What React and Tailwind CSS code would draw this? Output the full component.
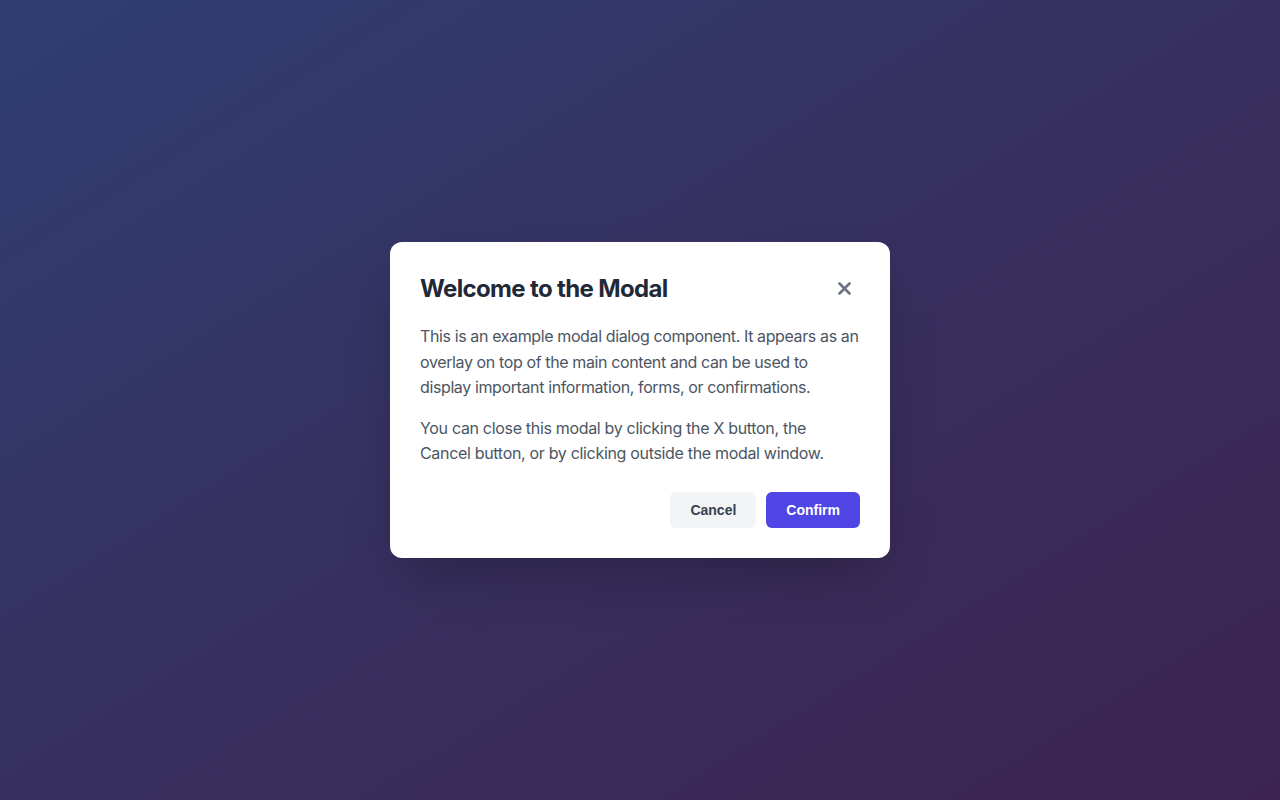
import { useState } from 'react';

export default function App() {
  const [open, setOpen] = useState(true);

  return (
    <div
      className="w-full h-[800px] flex items-center justify-center bg-gradient-to-br from-[#2e3e73] via-[#37305f] to-[#3d2450]"
      style={{ fontFamily: 'Inter, "Noto Sans", sans-serif' }}
      onClick={() => setOpen(false)}
    >
      {open && (
        <div
          className="w-[500px] bg-white rounded-xl p-[30px] shadow-2xl"
          onClick={e => e.stopPropagation()}
        >
          {/* Header */}
          <div className="flex items-center justify-between mb-[19px]">
            <h2 className="text-2xl leading-8 font-bold text-[#1f2937] mt-px tracking-[-0.027em]">
              Welcome to the Modal
            </h2>
            <button
              onClick={() => setOpen(false)}
              className="w-8 h-8 flex items-center justify-center text-[#6b7280] hover:text-gray-700"
            >
              <svg width="13" height="13" viewBox="0 0 13 13" fill="none">
                <path d="M1.5 1.5L11.5 11.5M11.5 1.5L1.5 11.5" stroke="currentColor" strokeWidth="2.6" strokeLinecap="round" />
              </svg>
            </button>
          </div>

          {/* Body */}
          <p className="text-base leading-[1.59] tracking-[-0.024em] text-[#4b5563] mb-[15px]">
            This is an example modal dialog component. It appears as an overlay on top of the main content and can be used to display important information, forms, or confirmations.
          </p>
          <p className="text-base leading-[1.59] tracking-[-0.02em] text-[#4b5563]">
            You can close this modal by clicking the X button, the Cancel button, or by clicking outside the modal window.
          </p>

          {/* Footer */}
          <div
            className="flex justify-end gap-[10px] mt-[25px]"
            style={{ fontFamily: '"Liberation Sans", Arial, sans-serif' }}
          >
            <button
              onClick={() => setOpen(false)}
              className="px-5 py-2 text-sm leading-5 font-bold rounded-md bg-[#f3f4f6] text-[#374151] hover:bg-gray-200"
            >
              Cancel
            </button>
            <button className="px-5 py-2 text-sm leading-5 font-bold rounded-md bg-[#4f46e5] text-white hover:bg-indigo-700">
              Confirm
            </button>
          </div>
        </div>
      )}
    </div>
  );
}
